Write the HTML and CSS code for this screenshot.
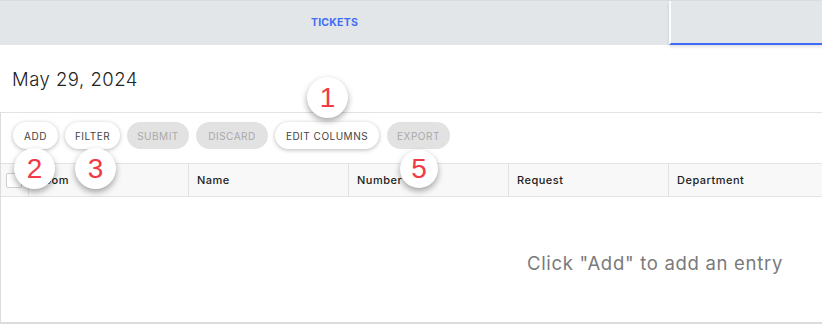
FILE: index.html
```html
<!DOCTYPE html>
<html>
<head>
<meta charset="utf-8">
<link rel="stylesheet" href="styles.css">
</head>
<body>
<div class="page">
  <div class="tabs">
    <div class="tab tab-main">TICKETS</div>
    <div class="tab tab-active"></div>
  </div>
  <div class="date-row">
    <div class="date">May 29, 2024</div>
  </div>
  <div class="panel">
    <div class="toolbar">
      <button class="btn w-add">ADD</button>
      <button class="btn w-filter">FILTER</button>
      <button class="btn disabled w-submit">SUBMIT</button>
      <button class="btn disabled w-discard">DISCARD</button>
      <button class="btn w-edit">EDIT COLUMNS</button>
      <button class="btn disabled w-export">EXPORT</button>
    </div>
    <div class="thead">
      <div class="cell cell-check"><span class="checkbox"></span></div>
      <div class="cell">Room</div>
      <div class="cell">Name</div>
      <div class="cell">Number</div>
      <div class="cell">Request</div>
      <div class="cell cell-last">Department</div>
    </div>
    <div class="tbody">
      <div class="empty">Click "Add" to add an entry</div>
    </div>
  </div>
  <div class="badge b1">1</div>
  <div class="badge b2">2</div>
  <div class="badge b3">3</div>
  <div class="badge b5">5</div>
</div>
</body>
</html>
```

FILE: styles.css
```css
* { box-sizing: border-box; }
html, body { margin: 0; padding: 0; background: #fff; }
body { font-family: "Inter", "Open Sans", sans-serif; color: #333; width: 822px; height: 324px; overflow: hidden; }
.page { position: relative; width: 822px; height: 324px; }

.tabs {
  display: flex;
  height: 45px;
  background: #e2e6e9;
  border-top: 1px solid #d9dde0;
}
.tab { display: flex; align-items: center; justify-content: center; }
.tab-main {
  flex: 0 0 669px;
  color: #3f6df3;
  font-size: 10.5px;
  font-weight: 700;
  letter-spacing: 0.2px;
  padding-bottom: 1px;
}
.tab-active {
  flex: 1;
  border-left: 2px solid #fbfbfb;
  border-bottom: 2px solid #3d6bf5;
  box-shadow: 0 2px 3px rgba(0,0,0,0.12);
}

.date-row { height: 67px; padding: 23px 0 0 12px; }
.date { font-size: 18.5px; font-weight: 300; color: #222; letter-spacing: 0.5px; }

.panel {
  border-top: 1px solid #e3e3e3;
  border-left: 1px solid #dcdcdc;
  border-bottom: 2px solid #dcdcdc;
  height: 212px;
}
.toolbar {
  display: flex;
  gap: 7px;
  padding: 9px 0 0 12px;
  height: 50px;
}
.btn {
  font-family: inherit;
  height: 27px;
  border: none;
  border-radius: 14px;
  background: #fff;
  color: #444;
  font-size: 10px;
  letter-spacing: 0.5px;
  padding: 0;
  box-shadow: 0 1px 4px rgba(0,0,0,0.28);
}
.btn.disabled { background: #e2e2e2; color: #a9a9a9; box-shadow: none; }
.w-add { width: 45px; }
.w-filter { width: 55px; }
.w-submit { width: 62px; }
.w-discard { width: 72px; }
.w-edit { width: 104px; }
.w-export { width: 63px; margin-left: 1px; }

.thead {
  display: flex;
  height: 34px;
  background: #f8f8f8;
  border-top: 1px solid #e3e3e3;
  border-bottom: 1px solid #e3e3e3;
}
.cell {
  flex: 0 0 160px;
  display: flex;
  align-items: center;
  padding-left: 8px;
  border-right: 1px solid #e3e3e3;
  font-size: 11px;
  font-weight: 500;
  letter-spacing: 0.5px;
  color: #222;
}
.cell-check { flex: 0 0 28px; padding-left: 5px; }
.cell-last { flex: 1; border-right: none; }
.checkbox {
  display: block;
  width: 16px;
  height: 15px;
  border: 1px solid #cfcfcf;
  background: #fff;
  border-radius: 2px;
}

.tbody { display: flex; justify-content: flex-end; padding: 55px 39px 0 0; }
.empty { font-size: 18.5px; color: #7a7a7a; letter-spacing: 0.7px; }

.badge {
  position: absolute;
  width: 41px;
  height: 41px;
  border-radius: 50%;
  background: #fff;
  box-shadow: 0 3px 6px rgba(0,0,0,0.35);
  color: #f23a46;
  font-family: "Liberation Sans", Arial, sans-serif;
  font-size: 28px;
  display: flex;
  align-items: center;
  justify-content: center;
}
.b1 { left: 307px; top: 77px; }
.b2 { left: 14px; top: 148px; }
.b3 { left: 75px; top: 148px; }
.b5 { left: 400px; top: 150px; width: 38px; height: 38px; }
```
